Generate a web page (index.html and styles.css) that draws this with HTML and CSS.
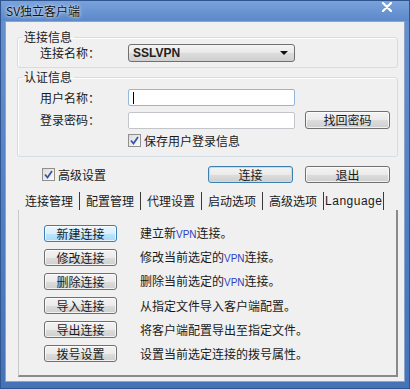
FILE: index.html
```html
<!DOCTYPE html>
<html lang="zh-CN">
<head>
  <meta charset="UTF-8">
  <title>SV独立客户端</title>
  <link rel="stylesheet" href="styles.css">
</head>
<body>

  <div class="window">
    <div class="titlebar">
      <span class="title">SV独立客户端</span>
      <span class="close">
        <svg width="12" height="10" viewBox="0 0 12 10"><path d="M2 1 L10 9 M10 1 L2 9" stroke="#fff" stroke-width="2.2" stroke-linecap="round"/></svg>
      </span>
    </div>

    <div class="client">
      <fieldset class="group group-conn">
        <legend>连接信息</legend>
        <div class="row">
          <span class="field-label">连接名称：</span>
          <div class="select">
            <span class="select-text">SSLVPN</span>
            <span class="arrow"></span>
          </div>
        </div>
      </fieldset>

      <fieldset class="group group-auth">
        <legend>认证信息</legend>
        <div class="row row-user">
          <span class="field-label">用户名称：</span>
          <div class="input focused"><span class="caret"></span></div>
        </div>
        <div class="row row-pass">
          <span class="field-label">登录密码：</span>
          <div class="input"></div>
          <button class="btn btn-find">找回密码</button>
        </div>
        <div class="row row-save">
          <span class="checkbox">
            <svg width="13" height="13" viewBox="0 0 13 13"><path d="M3 6.5 L5.5 9.5 L10 3" fill="none" stroke="#3a56a8" stroke-width="1.8"/></svg>
          </span>
          <span class="check-text">保存用户登录信息</span>
        </div>
      </fieldset>

      <div class="action-row">
        <span class="checkbox">
          <svg width="13" height="13" viewBox="0 0 13 13"><path d="M3 6.5 L5.5 9.5 L10 3" fill="none" stroke="#3a56a8" stroke-width="1.8"/></svg>
        </span>
        <span class="check-text">高级设置</span>
        <div class="actions">
          <button class="btn btn-default">连接</button>
          <button class="btn">退出</button>
        </div>
      </div>

      <div class="tabs">
        <span class="tab">连接管理</span>
        <span class="tab">配置管理</span>
        <span class="tab">代理设置</span>
        <span class="tab">启动选项</span>
        <span class="tab">高级选项</span>
        <span class="tab tab-en">Language</span>
      </div>

      <div class="tab-panel">
        <div class="cmd">
          <button class="btn cmd-btn btn-hot">新建连接</button>
          <span class="desc">建立新<span class="en">VPN</span>连接。</span>
        </div>
        <div class="cmd">
          <button class="btn cmd-btn">修改连接</button>
          <span class="desc">修改当前选定的<span class="en">VPN</span>连接。</span>
        </div>
        <div class="cmd">
          <button class="btn cmd-btn">删除连接</button>
          <span class="desc">删除当前选定的<span class="en">VPN</span>连接。</span>
        </div>
        <div class="cmd">
          <button class="btn cmd-btn">导入连接</button>
          <span class="desc">从指定文件导入客户端配置。</span>
        </div>
        <div class="cmd">
          <button class="btn cmd-btn">导出连接</button>
          <span class="desc">将客户端配置导出至指定文件。</span>
        </div>
        <div class="cmd">
          <button class="btn cmd-btn">拨号设置</button>
          <span class="desc">设置当前选定连接的拨号属性。</span>
        </div>
      </div>
    </div>
  </div>

</body>
</html>
```

FILE: styles.css
```css
:root {
  --frame: #5885c8;
  --frame-dark: #2f5590;
  --client-bg: #f0f0f0;
  --group-border: #d3dde6;
  --text: #1a1a1a;
  --btn-border: #707070;
  --focus-border: #3c7fb1;
}

* { margin: 0; padding: 0; box-sizing: border-box; }

body {
  font-family: "Noto Sans CJK SC", "Liberation Sans", sans-serif;
  font-size: 12px;
  color: var(--text);
  background: #fff;
}

.window {
  width: 410px;
  height: 389px;
  background: linear-gradient(to bottom, #6791d0, #4f7dc2 60%, #4673b8);
  border: 1px solid var(--frame-dark);
  display: flex;
  flex-direction: column;
}

.titlebar {
  height: 20px;
  display: flex;
  align-items: center;
  padding-left: 5px;
  padding-right: 16px;
  background: linear-gradient(to bottom, #7aa2db, #5b88c9);
}

.title {
  font-size: 12px;
  line-height: 14px;
  color: #111;
  text-shadow: 0 0 4px #dce8f8, 0 0 2px #dce8f8;
}

.close {
  margin-left: auto;
  display: flex;
  align-self: flex-start;
  margin-top: 1px;
}

.client {
  margin: 0 4px 6px 4px;
  flex: 1;
  background: var(--client-bg);
  border: 1px solid #8aa5cc;
  padding: 8px 6px 0 11px;
}

/* group boxes */
.group {
  border: 1px solid var(--group-border);
  border-radius: 3px;
  padding: 0;
  box-shadow: inset 1px 1px 0 #fff;
}

.group legend {
  font-size: 12px;
  line-height: 14px;
  padding: 0 2px;
  margin-left: 4px;
}

.group-conn { padding-bottom: 5px; }

.group-auth {
  margin-top: 2px;
  padding-bottom: 9px;
}

.row {
  display: flex;
  align-items: center;
  padding-left: 22px;
  height: 18px;
}

.row-user { margin-top: 5px; height: 17px; }
.row-pass { margin-top: 5px; }
.row-save { margin-top: 5px; height: 13px; padding-left: 110px; }

.field-label {
  width: 88px;
  line-height: 14px;
}

.select {
  width: 167px;
  height: 18px;
  border: 1px solid var(--btn-border);
  border-radius: 3px;
  background: linear-gradient(to bottom, #f4f4f4, #e9e9e9 50%, #dcdcdc 51%, #d0d0d0);
  display: flex;
  align-items: center;
  padding: 0 6px 0 4px;
}

.select-text {
  font-family: "Liberation Sans", sans-serif;
  font-weight: bold;
  font-size: 12px;
  color: #222;
}

.arrow {
  margin-left: auto;
  width: 0;
  height: 0;
  border-left: 4px solid transparent;
  border-right: 4px solid transparent;
  border-top: 4px solid #111;
}

.input {
  width: 167px;
  height: 17px;
  background: #fff;
  border: 1px solid #c2c5ca;
  border-radius: 2px;
  display: flex;
  align-items: center;
  padding-left: 4px;
}

.input.focused { border-color: #8fb8dc; }

.caret {
  width: 1px;
  height: 12px;
  background: #000;
}

/* checkboxes */
.checkbox {
  width: 13px;
  height: 13px;
  border: 1px solid #8f8f8f;
  background: linear-gradient(135deg, #dcdcdc, #fbfbfb);
  display: flex;
  flex-shrink: 0;
}

.checkbox svg { margin: -1px; }

.check-text {
  margin-left: 3px;
  line-height: 14px;
}

/* buttons */
.btn {
  font-family: inherit;
  font-size: 12px;
  color: var(--text);
  height: 18px;
  border: 1px solid var(--btn-border);
  border-radius: 3px;
  background: linear-gradient(to bottom, #f3f3f3, #ebebeb 50%, #dddddd 51%, #cfcfcf);
  box-shadow: inset 0 0 0 1px rgba(255, 255, 255, 0.7);
  line-height: 14px;
  white-space: nowrap;
}

.btn-find {
  width: 85px;
  margin-left: 10px;
}

.btn-default {
  border-color: var(--focus-border);
  box-shadow: inset 0 0 0 1px #b9e0f7;
}

.btn-hot {
  border-color: var(--focus-border);
  background: linear-gradient(to bottom, #eaf6fd, #d9f0fc 50%, #bee6fd 51%, #a7d9f5);
}

.action-row {
  margin-top: 9px;
  height: 17px;
  display: flex;
  align-items: center;
  padding-left: 25px;
}

.actions {
  margin-left: auto;
  margin-right: 8px;
  display: flex;
  gap: 12px;
}

.actions .btn {
  width: 85px;
  height: 17px;
}

/* tabs */
.tabs {
  margin-top: 9px;
  margin-left: 2px;
  height: 18px;
  display: flex;
  align-items: stretch;
  white-space: nowrap;
}

.tab {
  flex-shrink: 0;
  padding: 0 6px;
  border-right: 1px solid #3a3a3a;
  line-height: 18px;
}

.tab-en {
  font-family: "Liberation Sans", sans-serif;
  font-size: 12px;
  letter-spacing: 0.5px;
  padding: 0 1px 0 1px;
}

.tab-panel {
  margin-left: 1px;
  height: 167px;
  border-left: 1px solid #c9c9c9;
  border-right: 2px solid #8a8a8a;
  border-bottom: 2px solid #8a8a8a;
  padding: 15px 0 0 25px;
  display: flex;
  flex-direction: column;
  gap: 7px;
}

.cmd {
  display: flex;
  align-items: center;
  height: 17px;
}

.cmd-btn {
  width: 73px;
  height: 17px;
}

.desc {
  margin-left: 23px;
  line-height: 14px;
  white-space: nowrap;
}

.en {
  font-family: "Liberation Sans", sans-serif;
  font-size: 10px;
  color: #2b3fc4;
}
```
